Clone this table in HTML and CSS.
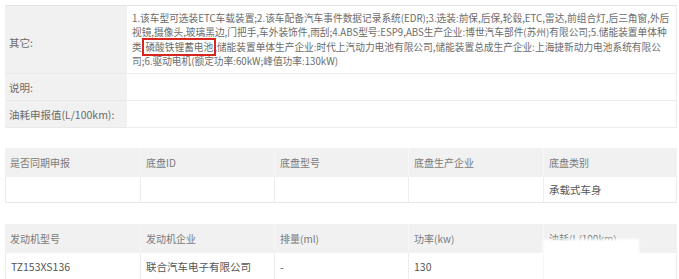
FILE: index.html
```html
<!DOCTYPE html>
<html lang="zh-CN">
<head>
<meta charset="utf-8">
<link rel="stylesheet" href="styles.css">
</head>
<body>
<div class="page">
  <div class="info">
    <div class="lab tall">其它:</div>
    <div class="val tall"><p class="para">1.该车型可选装ETC车载装置;2.该车配备汽车事件数据记录系统(EDR);3.选装:前保,后保,轮毂,ETC,雷达,前组合灯,后三角窗,外后视镜,摄像头,玻璃黑边,门把手,车外装饰件,雨刮;4.ABS型号:ESP9,ABS生产企业:博世汽车部件(苏州)有限公司;5.储能装置单体种类:<span class="mark">磷酸铁锂蓄电池</span>,储能装置单体生产企业:时代上汽动力电池有限公司,储能装置总成生产企业:上海捷新动力电池系统有限公司;6.驱动电机(额定功率:60kW;峰值功率:130kW)</p></div>
    <div class="lab">说明:</div>
    <div class="val"></div>
    <div class="lab">油耗申报值(L/100km):</div>
    <div class="val"></div>
  </div>

  <div class="grid5 chassis">
    <div class="th">是否同期申报</div>
    <div class="th">底盘ID</div>
    <div class="th">底盘型号</div>
    <div class="th">底盘生产企业</div>
    <div class="th">底盘类别</div>
    <div class="td"></div>
    <div class="td"></div>
    <div class="td"></div>
    <div class="td"></div>
    <div class="td">承载式车身</div>
  </div>

  <div class="grid5 engine">
    <div class="th">发动机型号</div>
    <div class="th">发动机企业</div>
    <div class="th">排量(ml)</div>
    <div class="th">功率(kw)</div>
    <div class="th">油耗(L/100km)</div>
    <div class="td">TZ153XS136</div>
    <div class="td">联合汽车电子有限公司</div>
    <div class="td">-</div>
    <div class="td">130</div>
    <div class="td"></div>
  </div>
  <div class="smudge"></div>
</div>
</body>
</html>
```

FILE: styles.css
```css
html, body {
  margin: 0;
  padding: 0;
  background: #fff;
}
body {
  font-family: "Noto Sans CJK SC", "Microsoft YaHei", sans-serif;
  color: #666;
  font-size: 10px;
  overflow: hidden;
}
.page {
  position: relative;
  padding: 5px 2px 0 5px;
  width: 672px;
}
.info {
  display: grid;
  grid-template-columns: 122px 550px;
  grid-template-rows: 68px 27px 27px;
  border-top: 1px solid #e4e4e4;
}
.lab {
  background: #f1f1f1;
  border-bottom: 1px solid #e9e9e9;
  display: flex;
  align-items: center;
  padding-left: 4px;
  font-size: 10.5px;
  color: #6a6a6a;
}
.lab.tall {
  padding-top: 6px;
}
.val {
  border-bottom: 1px solid #ececec;
  border-right: 1px solid #ececec;
  display: flex;
  align-items: center;
  padding: 0 5px;
}
.para {
  margin: 0;
  font-size: 9.7px;
  line-height: 14.5px;
  width: 542px;
  color: #6b6b6b;
}
.mark {
  outline: 2px solid #d8261e;
  outline-offset: 0;
  padding: 0 1px;
}
.grid5 {
  display: grid;
  grid-template-columns: 135px 134px 134px 135px 134px;
}
.chassis {
  margin-top: 20px;
  grid-template-rows: 29px 26px;
}
.engine {
  margin-top: 21px;
  grid-template-rows: 29px 27px;
}
.th {
  background: #f1f1f1;
  border-left: 1px solid #f6f6f6;
  display: flex;
  align-items: center;
  padding-left: 5px;
  font-size: 10px;
  color: #7a7a7a;
}
.th:first-child {
  border-left: none;
}
.td {
  border-left: 1px solid #ececec;
  border-bottom: 1px solid #e6e6e6;
  display: flex;
  align-items: center;
  padding-left: 5px;
  font-size: 10.5px;
  color: #555;
}
.grid5 .td:nth-child(10) {
  border-right: 1px solid #ececec;
}
.smudge {
  position: absolute;
  left: 543px;
  top: 239px;
  width: 96px;
  height: 45px;
  background: #fff;
  filter: blur(1.5px);
}
```
